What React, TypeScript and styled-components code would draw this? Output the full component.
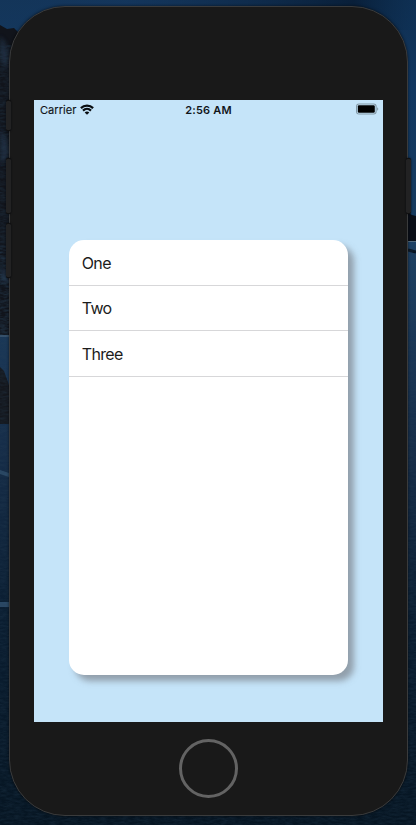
import React from "react";
import styled, { createGlobalStyle } from "styled-components";

const GlobalStyle = createGlobalStyle`
  * { box-sizing: border-box; }
  html, body { margin: 0; padding: 0; background: #06131f; }
  body { overflow: hidden; font-family: Inter, "Liberation Sans", sans-serif; }
`;

const Desktop = styled.main`
  position: relative;
  width: 416px;
  height: 825px;
  overflow: hidden;
  padding: 6px 8px 9px 9px;
`;

const Wallpaper = styled.svg`
  position: absolute;
  inset: 0;
`;

const Phone = styled.div`
  position: relative;
  display: flex;
  flex-direction: column;
  align-items: center;
  width: 399px;
  height: 810px;
  padding-top: 93px;
  background: #191919;
  border: 1px solid #3a3b3c;
  border-radius: 56px;
  box-shadow: 0 0 3px rgba(0, 0, 0, 0.6);
`;

const SideButton = styled.span<{ $side: "left" | "right"; $top: number; $height: number }>`
  position: absolute;
  ${({ $side }) => $side}: -4px;
  top: ${({ $top }) => $top}px;
  width: 5px;
  height: ${({ $height }) => $height}px;
  background: #222223;
  border-top: 1px solid #101010;
  border-bottom: 1px solid #101010;
  border-radius: 2px;
  box-shadow: 0 0 2px #05080c;
`;

const Screen = styled.section`
  display: flex;
  flex-direction: column;
  align-items: center;
  width: 349px;
  height: 622px;
  background: #c5e4f9;
`;

const StatusBar = styled.header`
  display: grid;
  grid-template-columns: 1fr auto 1fr;
  align-items: center;
  width: 100%;
  height: 19px;
  padding: 0 4px 0 6px;
  font-size: 11px;
  color: #111519;
`;

const Carrier = styled.div`
  display: flex;
  align-items: center;
  gap: 4px;
  letter-spacing: 0.05px;
  -webkit-text-stroke: 0.15px #111519;
`;

const Time = styled.time`
  margin-left: -2px;
  font-weight: 600;
  letter-spacing: 0.17px;
`;

const BatteryIcon = styled.svg`
  justify-self: end;
  margin-top: -1px;
`;

const Card = styled.div`
  width: 279.5px;
  height: 435px;
  margin-top: 121px;
  background: #fff;
  border-radius: 15px;
  box-shadow: 6px 6px 6px rgba(106, 106, 110, 0.56);
`;

const List = styled.ul`
  margin: 0;
  padding: 0;
  list-style: none;
`;

const Row = styled.li`
  display: flex;
  align-items: center;
  height: 45.6px;
  padding: 1px 13px 0;
  border-bottom: 1px solid #d7d7d9;
  font-size: 16px;
  letter-spacing: -0.65px;
  color: #1c1c1c;
`;

const HomeButton = styled.button`
  width: 59px;
  height: 59px;
  margin-top: 17px;
  padding: 0;
  border: 3px solid #636363;
  border-radius: 50%;
  background: transparent;
`;

const items = ["One", "Two", "Three"];

function CoastWallpaper() {
  return (
    <Wallpaper width="416" height="825" viewBox="0 0 416 825" aria-hidden="true">
      <defs>
        <linearGradient id="sky" x1="0" y1="0" x2="0" y2="1">
          <stop offset="0" stopColor="#102f51" />
          <stop offset="0.35" stopColor="#113760" />
          <stop offset="1" stopColor="#183c5e" />
        </linearGradient>
        <linearGradient id="sea" x1="0" y1="0" x2="0" y2="1">
          <stop offset="0" stopColor="#1d4165" />
          <stop offset="0.35" stopColor="#162d49" />
          <stop offset="0.65" stopColor="#0a1d30" />
          <stop offset="1" stopColor="#061522" />
        </linearGradient>
        <linearGradient id="topglow">
          <stop offset="0" stopColor="#173b61" stopOpacity="0.5" />
          <stop offset="0.3" stopColor="#173c66" stopOpacity="0.5" />
          <stop offset="0.85" stopColor="#071b33" stopOpacity="0.8" />
          <stop offset="1" stopColor="#0d3156" stopOpacity="0.4" />
        </linearGradient>
        <filter id="grain" x="0" y="0" width="100%" height="100%">
          <feTurbulence type="fractalNoise" baseFrequency="0.14 0.5" numOctaves="3" seed="4" />
          <feColorMatrix values="0 0 0 0 0.02  0 0 0 0 0.05  0 0 0 0 0.09  1.4 0 0 0 -0.4" />
        </filter>
        <filter id="soft" x="-50%" y="-10%" width="200%" height="120%">
          <feGaussianBlur stdDeviation="2" />
        </filter>
      </defs>
      <rect width="416" height="250" fill="url(#sky)" />
      <rect width="416" height="30" fill="url(#topglow)" />
      <rect y="240" width="416" height="585" fill="url(#sea)" />
      <path d="M0 25L7 29L14 28L25 39V335H0Z" fill="#11141b" />
      <path d="M0 36L5 42L8 54V68L0 60ZM0 130L7 140L9 153L3 165L0 160ZM0 266L9 272V284L0 281Z" fill="#233247" filter="url(#soft)" opacity="0.75" />
      <path d="M0 367L4 371L9 385V424H0Z" fill="#14171d" />
      <path d="M0 466L9 469V473L0 470ZM0 598H9V603H0Z" fill="#2b4966" transform="translate(0 4)" />
      <path d="M0 336H9M408 241.500H416" stroke="#526b7e" />
      <path d="M404 210L412 215L416 216V241H404Z" fill="#090e17" />
      <path d="M408 250L416 252" stroke="#07111e" strokeWidth="3" />
      <rect y="245" width="416" height="580" filter="url(#grain)" opacity="0.4" />
      <rect y="45" width="12" height="290" filter="url(#grain)" opacity="0.5" />
    </Wallpaper>
  );
}

function WifiIcon() {
  return (
    <svg width="14" height="11" viewBox="0 0 14 11" role="img" aria-label="Wi-Fi">
      <path d="M0.9 4.1C4.2 0.8 9.8 0.8 13.1 4.1M3 6.6C5.3 4.4 8.7 4.4 11 6.6" fill="none" stroke="#080c10" strokeWidth="2.2" />
      <path d="M7 10.8L4.7 8.4C6 7.2 8 7.2 9.3 8.4Z" fill="#080c10" />
    </svg>
  );
}

export default function App() {
  return (
    <>
      <GlobalStyle />
      <Desktop>
        <CoastWallpaper />
        <Phone>
          <SideButton $side="left" $top={93} $height={31} />
          <SideButton $side="left" $top={151} $height={56} />
          <SideButton $side="left" $top={216} $height={55} />
          <SideButton $side="right" $top={151} $height={56} />
          <Screen>
            <StatusBar>
              <Carrier>
                <span>Carrier</span>
                <WifiIcon />
              </Carrier>
              <Time>2:56 AM</Time>
              <BatteryIcon width="23" height="12" viewBox="0 0 23 12" role="img" aria-label="Battery full">
                <rect x="0.5" y="1" width="19.6" height="10" rx="2.5" fill="#c5e4f9" stroke="#8298a6" strokeWidth="1.1" />
                <rect x="1.8" y="2.2" width="17" height="7.6" rx="1.2" fill="#000" />
                <path d="M21.2 4.3C22.6 4.8 22.6 7.2 21.2 7.7Z" fill="#8298a6" />
              </BatteryIcon>
            </StatusBar>
            <Card>
              <List>
                {items.map((item) => (
                  <Row key={item}>{item}</Row>
                ))}
              </List>
            </Card>
          </Screen>
          <HomeButton aria-label="Home" />
        </Phone>
      </Desktop>
    </>
  );
}
